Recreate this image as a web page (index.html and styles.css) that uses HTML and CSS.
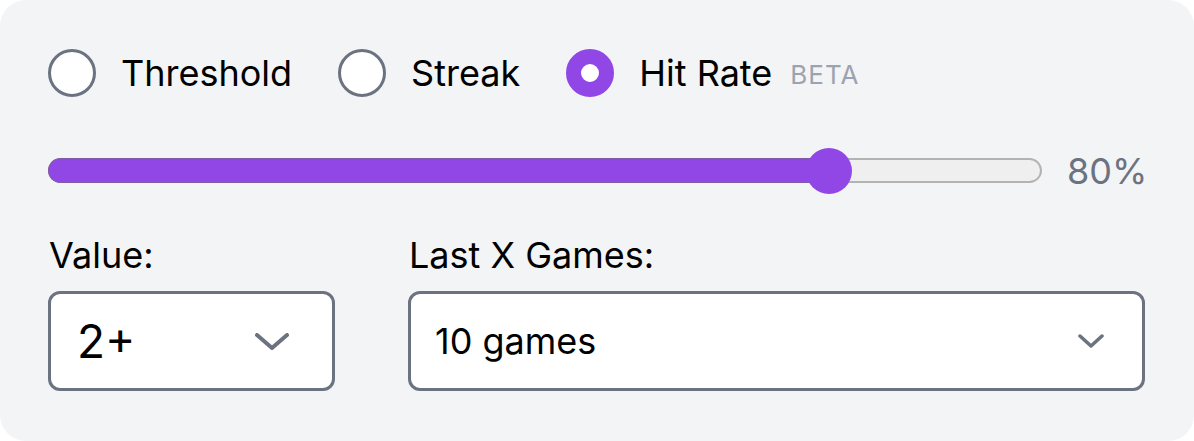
FILE: index.html
```html
<!DOCTYPE html>
<html>
<head>
<meta charset="utf-8">
<link rel="stylesheet" href="styles.css">
</head>
<body>
<div class="card">
  <div class="modes">
    <label class="mode"><span class="radio"></span><span class="mode-text">Threshold</span></label>
    <label class="mode"><span class="radio"></span><span class="mode-text">Streak</span></label>
    <label class="mode"><span class="radio checked"></span><span class="mode-text">Hit Rate</span><span class="beta">BETA</span></label>
  </div>
  <div class="slider-row">
    <div class="slider">
      <div class="track"></div>
      <div class="fill" style="width: calc(23px + 0.8 * (100% - 46px))"></div>
      <div class="thumb" style="left: calc(23px + 0.8 * (100% - 46px))"></div>
    </div>
    <span class="pct">80%</span>
  </div>
  <div class="fields">
    <div class="field field-value">
      <div class="field-label">Value:</div>
      <div class="select select-big">
        <span class="select-text">2+</span>
        <svg class="chev chev-big" viewBox="0 0 34 17" width="34" height="17"><path d="M2 2 L17 15 L32 2" fill="none" stroke="#6b7280" stroke-width="4" stroke-linecap="round" stroke-linejoin="round"/></svg>
      </div>
    </div>
    <div class="field field-games">
      <div class="field-label">Last X Games:</div>
      <div class="select select-small">
        <span class="select-text">10 games</span>
        <svg class="chev chev-small" viewBox="0 0 26 14" width="26" height="14"><path d="M2 2 L13 12 L24 2" fill="none" stroke="#6b7280" stroke-width="3.5" stroke-linecap="round" stroke-linejoin="round"/></svg>
      </div>
    </div>
  </div>
</div>
</body>
</html>
```
FILE: styles.css
```css
* { box-sizing: border-box; }
html, body { margin: 0; padding: 0; background: #ffffff; }
body {
  font-family: Inter, "Noto Sans", "Liberation Sans", sans-serif;
  color: #000;
  width: 1194px;
  height: 441px;
}
.card {
  width: 1194px;
  height: 441px;
  background: #f3f4f6;
  border-radius: 26px;
  padding: 49px 49px 50px 48px;
  display: flex;
  flex-direction: column;
}
.modes {
  display: flex;
  align-items: center;
  height: 48px;
}
.mode {
  display: flex;
  align-items: center;
  margin-right: 46px;
}
.radio {
  width: 48px;
  height: 48px;
  border-radius: 50%;
  border: 3px solid #6b7280;
  background: #fff;
  flex: none;
}
.radio.checked {
  border: 15px solid #9146e6;
  background: #fff;
}
.mode-text {
  margin-left: 25px;
  font-size: 36px;
  line-height: 48px;
}
.beta {
  margin-left: 18px;
  font-size: 26px;
  color: #9ca3af;
  letter-spacing: 1px;
  line-height: 48px;
  padding-top: 4px;
}
.slider-row {
  margin-top: 50px;
  display: flex;
  align-items: center;
  height: 48px;
}
.slider {
  position: relative;
  flex: 1;
  height: 48px;
}
.track {
  position: absolute;
  left: 0; right: 0;
  top: 11px;
  height: 25px;
  border-radius: 13px;
  background: #efefef;
  border: 2px solid #b3b3b3;
}
.fill {
  position: absolute;
  left: 0;
  top: 11px;
  height: 25px;
  border-radius: 13px 0 0 13px;
  background: #9146e6;
  border: 1.5px solid #7f5aa6;
  border-right: none;
}
.thumb {
  position: absolute;
  top: 1px;
  width: 46px;
  height: 46px;
  margin-left: -23px;
  border-radius: 50%;
  background: #9146e6;
}
.pct {
  margin-left: 25px;
  width: 78px;
  font-size: 36px;
  color: #6b7280;
  line-height: 48px;
}
.fields {
  margin-top: 38px;
  display: flex;
  gap: 73px;
}
.field-value { width: 287px; flex: none; }
.field-games { flex: 1; }
.field-label {
  font-size: 36px;
  line-height: 44px;
  padding-left: 1px;
}
.select {
  margin-top: 14px;
  height: 100px;
  background: #fff;
  border: 3px solid #6b7280;
  border-radius: 12px;
  display: flex;
  align-items: center;
  justify-content: space-between;
}
.select-big { padding: 0 43px 0 26px; }
.select-big .select-text { font-size: 46px; }
.select-small { padding: 0 38px 0 24px; }
.select-small .select-text { font-size: 36px; }
.chev { display: block; }
```
